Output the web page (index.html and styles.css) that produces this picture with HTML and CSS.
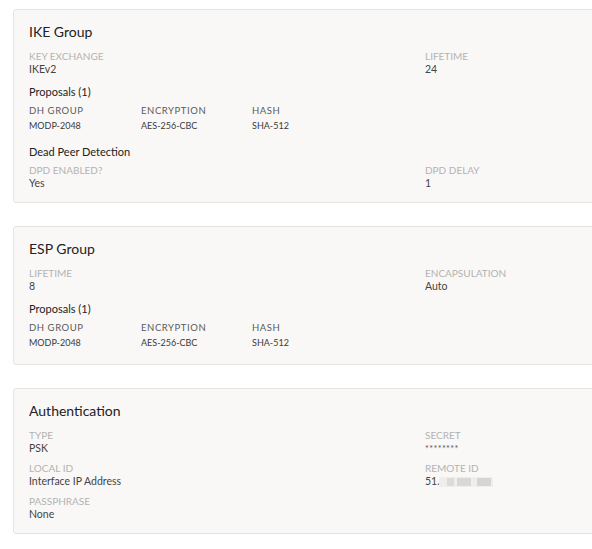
FILE: index.html
```html
<!DOCTYPE html>
<html lang="en">
<head>
<meta charset="utf-8">
<title>VPN Details</title>
<link rel="stylesheet" href="styles.css">
</head>
<body>
<div class="page">
  <section class="card">
    <h2 class="card-title">IKE Group</h2>
    <div class="fields">
      <div class="field"><div class="label">Key Exchange</div><div class="value">IKEv2</div></div>
      <div class="field"><div class="label">Lifetime</div><div class="value">24</div></div>
    </div>
    <h3 class="sub">Proposals (1)</h3>
    <div class="proposal">
      <div class="th">DH Group</div><div class="th">Encryption</div><div class="th">Hash</div>
      <div class="td">MODP-2048</div><div class="td">AES-256-CBC</div><div class="td">SHA-512</div>
    </div>
    <h3 class="sub sub-spaced">Dead Peer Detection</h3>
    <div class="fields">
      <div class="field"><div class="label">DPD Enabled?</div><div class="value">Yes</div></div>
      <div class="field"><div class="label">DPD Delay</div><div class="value">1</div></div>
    </div>
  </section>

  <section class="card">
    <h2 class="card-title">ESP Group</h2>
    <div class="fields">
      <div class="field"><div class="label">Lifetime</div><div class="value">8</div></div>
      <div class="field"><div class="label">Encapsulation</div><div class="value">Auto</div></div>
    </div>
    <h3 class="sub">Proposals (1)</h3>
    <div class="proposal proposal-last">
      <div class="th">DH Group</div><div class="th">Encryption</div><div class="th">Hash</div>
      <div class="td">MODP-2048</div><div class="td">AES-256-CBC</div><div class="td">SHA-512</div>
    </div>
  </section>

  <section class="card">
    <h2 class="card-title">Authentication</h2>
    <div class="fields">
      <div class="field"><div class="label">Type</div><div class="value">PSK</div></div>
      <div class="field"><div class="label">Secret</div><div class="value secret">********</div></div>
      <div class="field"><div class="label">Local ID</div><div class="value">Interface IP Address</div></div>
      <div class="field"><div class="label">Remote ID</div><div class="value">51.<span class="redact"><span class="blk b1"></span><span class="blk b2"></span><span class="blk b3"></span></span></div></div>
      <div class="field"><div class="label">Passphrase</div><div class="value">None</div></div>
    </div>
  </section>
</div>
</body>
</html>
```
FILE: styles.css
```css
html {
  overflow: hidden;
}
body {
  margin: 0;
  background: #ffffff;
  font-family: Lato, "Open Sans", "Liberation Sans", sans-serif;
  color: #333333;
}
.page {
  width: 592px;
  box-sizing: border-box;
  overflow: hidden;
  padding: 9px 0 0 13px;
  display: flex;
  flex-direction: column;
  gap: 23px;
}
.card {
  width: 820px;
  flex-shrink: 0;
  box-sizing: border-box;
  background: #f9f8f7;
  border: 1px solid #e6e4e2;
  border-radius: 3px;
  padding: 12px 15px 12px 15px;
}
.card-title {
  margin: 0 0 8px 0;
  font-size: 14px;
  line-height: 20px;
  font-weight: 400;
  color: #222222;
}
.fields {
  display: grid;
  grid-template-columns: 396px 1fr;
  row-gap: 7px;
}
.label {
  font-size: 10px;
  line-height: 13px;
  text-transform: uppercase;
  color: #b3b3b3;
}
.value {
  font-size: 10.5px;
  line-height: 13px;
  color: #444444;
  white-space: nowrap;
}
.secret {
  font-size: 9px;
  letter-spacing: 0.4px;
  color: #555555;
}
.sub {
  margin: 8px 0 5px 0;
  font-size: 11px;
  line-height: 15px;
  font-weight: 400;
  color: #222222;
}
.sub-spaced {
  margin-top: 12px;
}
.proposal {
  display: grid;
  grid-template-columns: 112px 111px 1fr;
  row-gap: 2px;
}
.proposal-last {
  margin-bottom: 3px;
}
.th {
  font-size: 9.5px;
  line-height: 13px;
  text-transform: uppercase;
  letter-spacing: 0.06em;
  color: #5a5a5a;
}
.td {
  font-size: 9px;
  line-height: 13px;
  color: #3a3a3a;
}
.redact {
  display: inline-flex;
  vertical-align: -2px;
  width: 54px;
  height: 10px;
  margin-left: -1px;
  background: #efeeed;
  filter: blur(0.6px);
  position: relative;
}
.blk {
  position: absolute;
  top: 1px;
  height: 8px;
  background: #dcdbda;
}
.b1 { left: 8px; width: 7px; }
.b2 { left: 18px; width: 14px; background: #d9d8d7; }
.b3 { left: 38px; width: 14px; background: #d6d5d4; }
```
